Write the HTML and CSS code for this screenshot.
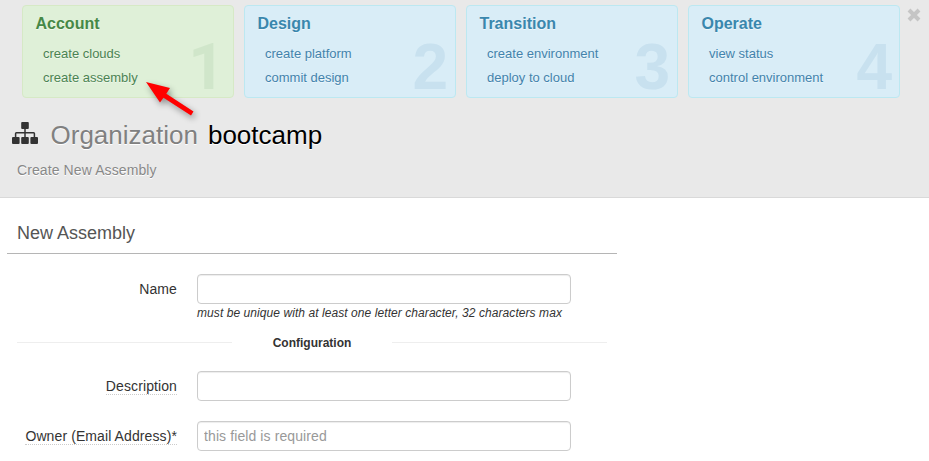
FILE: index.html
```html
<!DOCTYPE html>
<html lang="en">
<head>
<meta charset="utf-8">
<title>New Assembly</title>
<link rel="stylesheet" href="styles.css">
</head>
<body>
<header class="header">
  <div class="steps">
    <section class="step step-active">
      <h4>Account</h4>
      <a>create clouds</a>
      <a>create assembly</a>
      <span class="number">1</span>
      <svg class="arrow" width="56" height="44" viewBox="0 0 56 44"><path d="M5 5 29 11 25.3 16.8 52.5 34.5 50 38.5 22.5 20.8 19 25.5Z"/></svg>
    </section>
    <section class="step">
      <h4>Design</h4>
      <a>create platform</a>
      <a>commit design</a>
      <span class="number">2</span>
    </section>
    <section class="step">
      <h4>Transition</h4>
      <a>create environment</a>
      <a>deploy to cloud</a>
      <span class="number">3</span>
    </section>
    <section class="step">
      <h4>Operate</h4>
      <a>view status</a>
      <a>control environment</a>
      <span class="number">4</span>
    </section>
    <svg class="close" width="14" height="14" viewBox="0 0 14 14"><path d="M2 2 12 12M12 2 2 12"/></svg>
  </div>
  <h1 class="title">
    <svg class="sitemap" width="26" height="22" viewBox="0 0 26 22"><rect x="9.2" y="0" width="7.6" height="7" rx="1"/><rect x="0" y="15" width="7.6" height="7" rx="1"/><rect x="9.2" y="15" width="7.6" height="7" rx="1"/><rect x="18.4" y="15" width="7.6" height="7" rx="1"/><path d="M13 6v10M3.6 16v-4.5q0-.8.8-.8h17.2q.8 0 .8.8V16"/></svg>
    <span class="kind">Organization</span><span>bootcamp</span>
  </h1>
  <p class="subtitle">Create New Assembly</p>
</header>
<main class="content">
  <h2 class="section-title">New Assembly</h2>
  <form class="form">
    <div class="row">
      <label for="name">Name</label>
      <div class="controls">
        <input id="name" type="text">
        <p class="help">must be unique with at least one letter character, 32 characters max</p>
      </div>
    </div>
    <div class="divider"><span>Configuration</span></div>
    <div class="row">
      <label for="description"><span class="hint">Description</span></label>
      <div class="controls"><input id="description" type="text"></div>
    </div>
    <div class="row">
      <label for="owner"><span class="hint">Owner (Email Address)*</span></label>
      <div class="controls"><input id="owner" type="text" placeholder="this field is required"></div>
    </div>
  </form>
</main>
</body>
</html>
```
FILE: styles.css
```css
* { box-sizing: border-box; }
body {
  margin: 0;
  overflow: hidden;
  background: #fff;
  color: #333;
  font: 14px/20px "Liberation Sans", Arial, sans-serif;
}
h1, h2, h4, p { margin: 0; font-weight: normal; }
.header {
  height: 198px;
  padding-top: 5px;
  background: #e9e9e9;
  border-bottom: 1px solid #d9d9d9;
  text-shadow: 0 1px 0 #fff;
}
.steps { display: flex; gap: 10px; padding-left: 22px; }
.step {
  position: relative;
  flex: none;
  width: 212px;
  height: 93px;
  padding: 8px 12px 0;
  background: #d9edf7;
  border: 1px solid #bce8f1;
  border-radius: 4px;
  color: #3a87ad;
  text-shadow: 0 1px 0 rgba(255, 255, 255, .5);
}
.step h4 { margin: 0 0 8px .5px; font-size: 16px; font-weight: bold; line-height: 20px; }
.step a { display: block; margin-left: 8px; font-size: 13px; line-height: 24px; color: #4383ac; }
.step-active { background: #dff0d8; border-color: #d6e9c6; color: #468847; }
.step-active a { color: #4b8352; }
.number {
  position: absolute;
  right: 7px;
  bottom: -2px;
  font-size: 64px;
  line-height: 64px;
  font-weight: bold;
  color: #c8e1ef;
  text-shadow: none;
}
.step-active .number { right: 8px; bottom: -3px; color: #d0e6ca; font-family: Roboto, sans-serif; }
.arrow {
  position: absolute;
  left: 118px;
  top: 71px;
  z-index: 1;
  overflow: visible;
  fill: #f00;
  filter: drop-shadow(2px 3px 3px rgba(0, 0, 0, .4));
}
.close { flex: none; margin: 3px 0 0 -3px; stroke: #c5c5c5; stroke-width: 4; }
.title {
  display: flex;
  align-items: center;
  height: 36px;
  margin-top: 19px;
  padding-left: 12px;
  font-size: 26px;
  line-height: 36px;
  color: #000;
}
.sitemap { margin: -5px 12.5px 0 0; fill: #333; }
.sitemap path { fill: none; stroke: #333; stroke-width: 1.5; }
.kind { margin-right: 10px; color: #808080; }
.subtitle { margin-top: 7px; padding-left: 17px; color: #888; letter-spacing: .1px; }
.content { width: 617px; padding: 20px 0 0 7px; }
.section-title {
  height: 36px;
  padding-left: 10px;
  border-bottom: 1px solid #b5b5b5;
  font-size: 18px;
  line-height: 30px;
  color: #555;
}
.form { padding-top: 20px; }
.row { display: flex; margin-bottom: 20px; }
.row label { width: 170px; margin-right: 20px; padding-top: 5px; text-align: right; letter-spacing: .1px; }
.hint { display: inline-block; line-height: 17px; padding-top: 1px; border-bottom: 1px dotted #ccc; }
.row .hint { height: 18px; }
.controls { width: 374px; }
.controls input {
  display: block;
  width: 374px;
  height: 30px;
  padding: 4px 6px;
  border: 1px solid #ccc;
  border-radius: 4px;
  box-shadow: inset 0 1px 1px rgba(0, 0, 0, .075);
  font: inherit;
  letter-spacing: .1px;
}
.controls input::placeholder { color: #999; opacity: 1; }
.help { height: 19px; font-size: 12px; line-height: 18px; font-style: italic; white-space: nowrap; letter-spacing: .07px; }
.divider {
  display: flex;
  align-items: center;
  justify-content: space-between;
  height: 20px;
  margin: -11px 10px 19px;
  font-size: 12px;
  font-weight: bold;
}
.divider span { padding-top: 1px; }
.divider::before, .divider::after { content: ""; width: 215px; border-top: 1px solid #eee; }
```
